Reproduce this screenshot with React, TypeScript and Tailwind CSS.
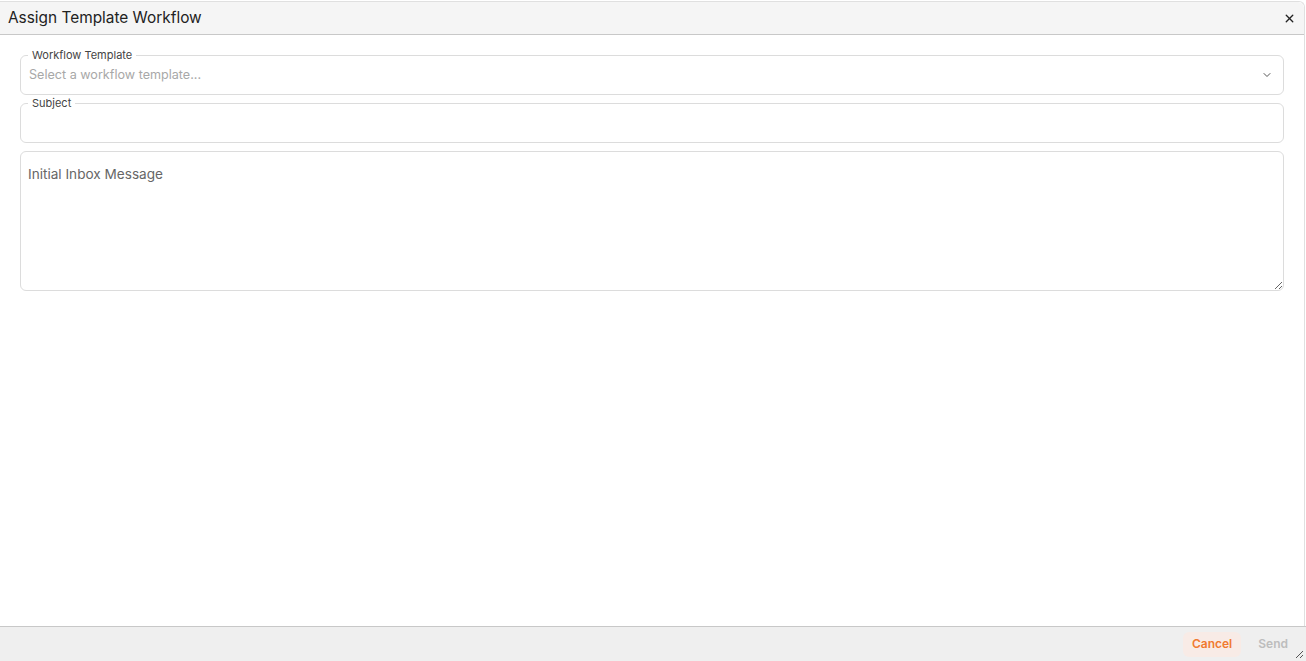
import { X, ChevronDown } from 'lucide-react';

function App() {
  return (
    <div
      className="h-[661px] w-[1306px] bg-white flex flex-col text-[#333] overflow-hidden"
      style={{ fontFamily: 'Inter, "Noto Sans", sans-serif' }}
    >
      <div className="flex flex-col flex-1 min-h-0 border-r border-t border-[#e0e0e0] rounded-tr-md mt-px mr-[1px]">
        {/* Header */}
        <div className="h-[33px] bg-[#f5f5f5] border-b border-[#c8c8c8] flex items-center justify-between pl-2 pr-[8px] rounded-tr-md">
          <h1 className="text-[15.4px] text-[#222]">Assign Template Workflow</h1>
          <button aria-label="Close" className="text-[#222]">
            <X className="h-[13px] w-[13px]" strokeWidth={2.5} />
          </button>
        </div>

        {/* Body */}
        <div className="flex-1 px-5 pt-[20px] flex flex-col gap-2">
          <fieldset className="border border-[#dcdcdc] rounded-md h-[46px] px-2 -mt-[6px]">
            <legend className="text-[11px] text-[#444] px-1 ml-[-1px] leading-[12px]">Workflow Template</legend>
            <div className="flex items-center justify-between h-[26px] pt-[2px]">
              <span className="text-[12.6px] text-[#a8a8a8]">Select a workflow template...</span>
              <ChevronDown className="h-3 w-3 text-[#555] mr-[2px]" strokeWidth={2} />
            </div>
          </fieldset>

          <fieldset className="border border-[#dcdcdc] rounded-md h-[46px] px-2 -mt-[6px]">
            <legend className="text-[11px] text-[#444] px-1 ml-[-1px] leading-[12px]">Subject</legend>
          </fieldset>

          <textarea
            placeholder="Initial Inbox Message"
            className="h-[140px] w-full border border-[#dcdcdc] rounded-md px-[7px] pt-[12px] text-[13.6px] text-[#333] placeholder:text-[#666] resize-y focus:outline-none"
          />
        </div>
      </div>

      {/* Footer */}
      <div className="h-[35px] bg-[#efefef] border-t border-[#c8c8c8] flex items-center justify-end gap-[17px] pr-[18px] relative">
        <button className="h-[25px] px-[9px] rounded-md bg-[#f8ebe6] text-[#f07a30] text-[12px] font-semibold">
          Cancel
        </button>
        <button className="text-[12px] font-semibold text-[#bdbdbd]">Send</button>
        <svg className="absolute right-[2px] bottom-[2px]" width="9" height="9" viewBox="0 0 9 9">
          <path d="M8 1L1 8M8 5L5 8" stroke="#555" strokeWidth="1" />
        </svg>
      </div>
    </div>
  );
}

export default App;
